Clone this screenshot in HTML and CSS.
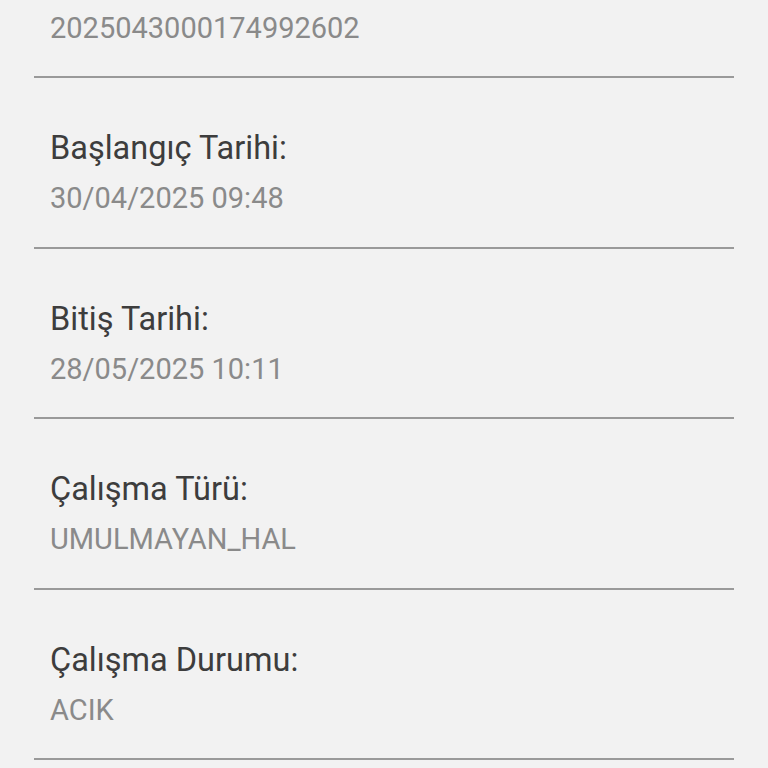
FILE: index.html
```html
<!DOCTYPE html>
<html lang="tr">
<head>
<meta charset="utf-8">
<link rel="stylesheet" href="styles.css">
</head>
<body>
<div class="list">
  <div class="item">
    <div class="label">Çalışma No:</div>
    <div class="value">2025043000174992602</div>
  </div>
  <div class="item">
    <div class="label">Başlangıç Tarihi:</div>
    <div class="value">30/04/2025 09:48</div>
  </div>
  <div class="item">
    <div class="label">Bitiş Tarihi:</div>
    <div class="value">28/05/2025 10:11</div>
  </div>
  <div class="item">
    <div class="label">Çalışma Türü:</div>
    <div class="value">UMULMAYAN_HAL</div>
  </div>
  <div class="item">
    <div class="label">Çalışma Durumu:</div>
    <div class="value">ACIK</div>
  </div>
</div>
</body>
</html>
```
FILE: styles.css
```css
html, body {
  margin: 0;
  padding: 0;
  background: #f2f2f2;
  height: 768px;
  overflow: hidden;
}
body {
  font-family: Roboto, "Noto Sans", sans-serif;
}
.list {
  margin: -92.5px 34px 0 34px;
}
.item {
  padding: 45px 16px 23.5px 16px;
  border-bottom: 2px solid #9a9a9a;
}
.label {
  font-size: 32.5px;
  line-height: 50px;
  color: #3d3d3d;
}
.value {
  font-size: 29px;
  line-height: 50px;
  color: #8a8a8a;
}
```
